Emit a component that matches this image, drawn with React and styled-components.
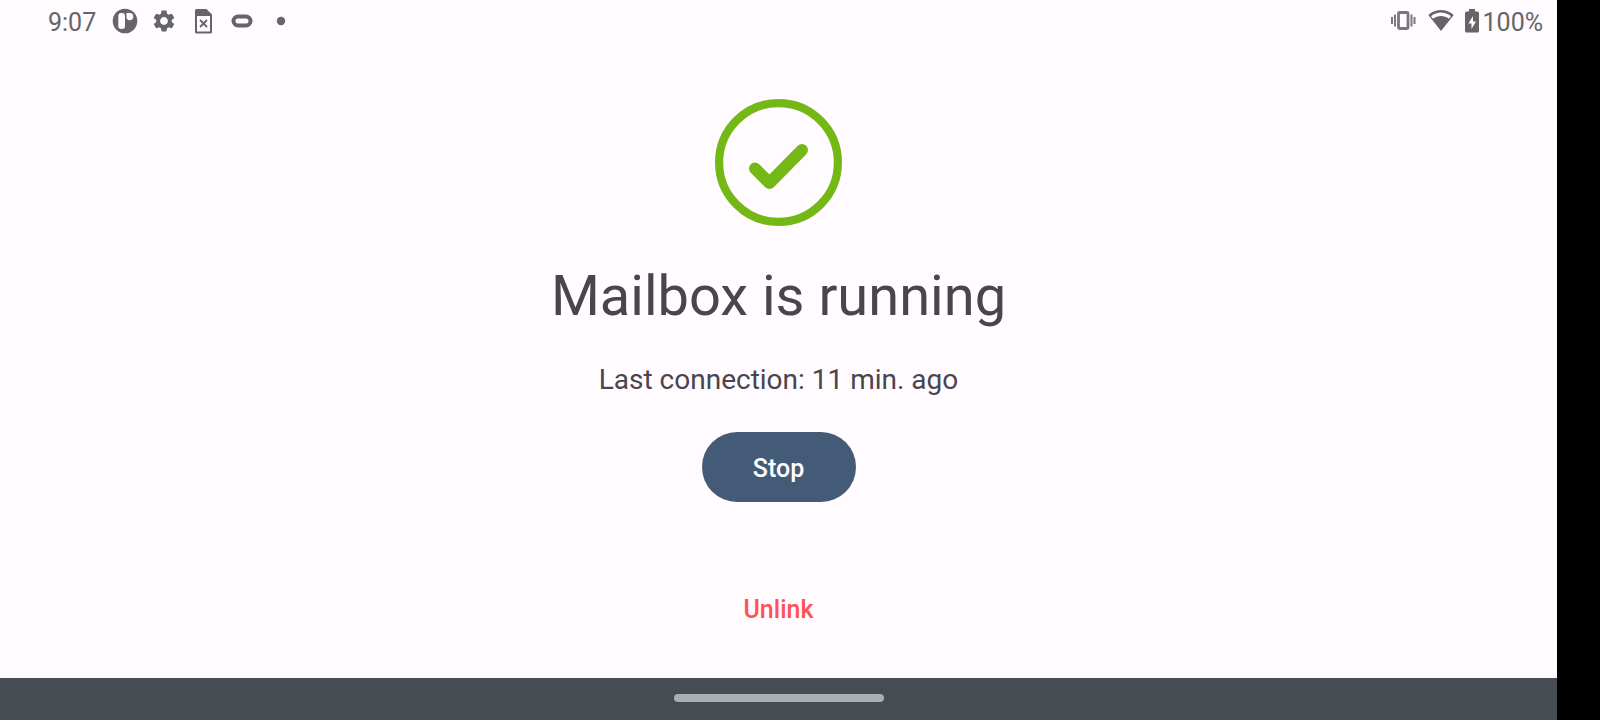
import React from "react";
import styled, { createGlobalStyle } from "styled-components";
import { MdSettings } from "react-icons/md";

const GlobalStyle = createGlobalStyle`
  *, *::before, *::after { box-sizing: border-box; }
  body { margin: 0; background: #000; font-family: Roboto, sans-serif; }
  h1, p { margin: 0; font-weight: 400; }
`;

const Device = styled.div`
  display: flex;
  min-height: 100vh;
  padding-right: 43px;
  background: #000;
`;

const Screen = styled.div`
  flex: 1;
  display: flex;
  flex-direction: column;
  background: #fffbff;
  color: #48454e;
`;

const StatusBar = styled.header`
  display: flex;
  justify-content: space-between;
  height: 44px;
  padding: 0 14px 0 48px;
  color: #656467;
  font-size: 25px;
  line-height: 40px;
`;

const Notifications = styled.div`
  display: flex;
  align-items: center;
  gap: 13px;
  height: 42px;
`;

const Clock = styled.time`
  width: 51px;
  padding-top: 4px;
`;

const SystemIcons = styled.div`
  display: flex;
  align-items: center;
  gap: 11px;
  height: 42px;
`;

const Battery = styled.span`
  display: flex;
  align-items: center;
  gap: 4px;
`;

const Percent = styled.span`
  padding-top: 4px;
`;

const Glyph = styled.svg`
  display: block;
  flex: none;
`;

const Content = styled.main`
  flex: 1;
  display: flex;
  flex-direction: column;
  align-items: center;
  padding: 55px 24px 35px;
`;

const Title = styled.h1`
  margin-top: 34px;
  font-size: 56px;
  line-height: 72px;
`;

const Detail = styled.p`
  margin-top: 27px;
  font-size: 28px;
  line-height: 42px;
`;

const Button = styled.button`
  min-width: 154px;
  height: 70px;
  margin-top: ${(p) => (p.$filled ? 31 : 71)}px;
  padding: 3px 42px 0;
  border: 0;
  border-radius: 35px;
  background: ${(p) => (p.$filled ? "#445b78" : "transparent")};
  color: ${(p) => (p.$filled ? "#fff" : "#ff5252")};
  font: 500 25px/28px Roboto, sans-serif;
  cursor: pointer;
`;

const NavBar = styled.footer`
  display: flex;
  justify-content: center;
  height: 42px;
  padding-top: 16px;
  background: #454d53;
`;

const Handle = styled.div`
  width: 210px;
  height: 8px;
  border-radius: 4px;
  background: #abaeb1;
`;

function PIcon() {
  return (
    <Glyph width="26" height="26" viewBox="0 0 26 26" aria-hidden="true">
      <circle cx="13" cy="13" r="12.300" fill="currentColor" />
      <rect x="6.300" y="5" width="6.700" height="16" rx="3" fill="#fffbff" />
      <path d="M14.500 5h3.200a3.600 3.600 0 1 1-3.200 5.200z" fill="#fffbff" />
    </Glyph>
  );
}

function SimIcon() {
  return (
    <Glyph width="26" height="26" viewBox="0 0 26 26" aria-hidden="true">
      <path
        fill="currentColor"
        fillRule="evenodd"
        d="M6 1h10.500l5.500 5.500V24q0 1.500-1.500 1.500h-14Q5 25.500 5 24V2.500Q5 1 6 1zM7 8v15.500h13V8z"
      />
      <path d="M10 12l7 7M17 12l-7 7" stroke="currentColor" strokeWidth="1.800" />
    </Glyph>
  );
}

function PillIcon() {
  return (
    <Glyph width="26" height="26" viewBox="0 0 26 26" aria-hidden="true">
      <rect x="4.500" y="8.500" width="17" height="9" rx="4.500" fill="none" stroke="currentColor" strokeWidth="4" />
    </Glyph>
  );
}

function DotIcon() {
  return (
    <Glyph width="26" height="26" viewBox="0 0 26 26" aria-hidden="true">
      <circle cx="13" cy="13" r="4.200" fill="currentColor" />
    </Glyph>
  );
}

function VibrateIcon() {
  return (
    <Glyph width="28" height="24" viewBox="0 0 28 24" aria-hidden="true">
      <g fill="none" stroke="#79787b" strokeWidth="2">
        <rect x="9.500" y="3.500" width="9.500" height="16" rx="1" strokeWidth="2.800" />
        <path d="M6 5.500v12M3 8v7M22.500 5.500v12M25.500 8v7" />
      </g>
    </Glyph>
  );
}

function WifiIcon() {
  return (
    <Glyph width="26" height="24" viewBox="0 0 26 24" aria-hidden="true">
      <path d="M.300 6C7.500-.800 18.500-.800 25.700 6L13 22z" fill="currentColor" />
      <path d="M3 7.200C9 2.200 17 2.200 23 7.200L21 9.700C16 6.200 10 6.200 5 9.700z" fill="#fffbff" />
    </Glyph>
  );
}

function BatteryIcon() {
  return (
    <Glyph width="14" height="24" viewBox="0 0 14 24" aria-hidden="true">
      <path
        fill="currentColor"
        fillRule="evenodd"
        d="M4 0h6v2.500h2.500Q14 2.500 14 4v18q0 1.500-1.500 1.500h-11Q0 23.500 0 22V4q0-1.500 1.500-1.500H4zM8 7l-4.500 7.500h3V20l4.500-7.500H8z"
      />
    </Glyph>
  );
}

function SuccessMark() {
  return (
    <Glyph width="127" height="127" viewBox="0 0 127 127" role="img" aria-label="Running">
      <g fill="none" stroke="#74b816">
        <circle cx="63.500" cy="63.500" r="59.400" strokeWidth="8.200" />
        <path
          d="M40 69.500L54.500 84L87 51"
          strokeWidth="12"
          strokeLinecap="round"
          strokeLinejoin="round"
        />
      </g>
    </Glyph>
  );
}

export default function App() {
  return (
    <>
      <GlobalStyle />
      <Device>
        <Screen>
          <StatusBar>
            <Notifications>
              <Clock>9:07</Clock>
              <PIcon />
              <MdSettings size={26} aria-hidden="true" />
              <SimIcon />
              <PillIcon />
              <DotIcon />
            </Notifications>
            <SystemIcons>
              <VibrateIcon />
              <WifiIcon />
              <Battery>
                <BatteryIcon />
                <Percent>100%</Percent>
              </Battery>
            </SystemIcons>
          </StatusBar>
          <Content>
            <SuccessMark />
            <Title>Mailbox is running</Title>
            <Detail>Last connection: 11 min. ago</Detail>
            <Button type="button" $filled>Stop</Button>
            <Button type="button">Unlink</Button>
          </Content>
          <NavBar>
            <Handle />
          </NavBar>
        </Screen>
      </Device>
    </>
  );
}
